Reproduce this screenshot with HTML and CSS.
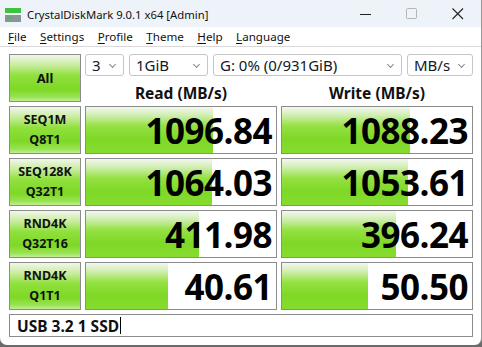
FILE: index.html
```html
<!DOCTYPE html>
<html lang="en">
<head>
    <meta charset="UTF-8">
    <title>CrystalDiskMark 9.0.1 x64 [Admin]</title>
    <link rel="stylesheet" href="styles.css">
</head>
<body>
    <div class="pencere">
        <div class="baslik">
            <svg class="ikon" width="16" height="14" viewBox="0 0 16 14">
                <rect x="0" y="0" width="16" height="5" fill="#3cc43c"/>
                <rect x="0" y="7" width="16" height="7" fill="#8c9499"/>
                <rect x="2" y="9" width="4" height="2" fill="#3cc43c"/>
            </svg>
            <span class="baslikYazi">CrystalDiskMark 9.0.1 x64 [Admin]</span>
            <div class="kontroller">
                <span class="kontrol"><svg width="12" height="12" viewBox="0 0 12 12"><line x1="0" y1="6.5" x2="11" y2="6.5" stroke="#222" stroke-width="1"/></svg></span>
                <span class="kontrol"><svg width="12" height="12" viewBox="0 0 12 12"><rect x="0.5" y="0.5" width="10" height="10" rx="1" fill="none" stroke="#b5b5b5" stroke-width="1"/></svg></span>
                <span class="kontrol"><svg width="12" height="12" viewBox="0 0 12 12"><path d="M0.5 0.5 L11 11 M11 0.5 L0.5 11" stroke="#222" stroke-width="1.1"/></svg></span>
            </div>
        </div>
        <div class="menu">
            <span><u>F</u>ile</span>
            <span><u>S</u>ettings</span>
            <span><u>P</u>rofile</span>
            <span><u>T</u>heme</span>
            <span><u>H</u>elp</span>
            <span><u>L</u>anguage</span>
        </div>
        <div class="icerik">
            <div class="tablo">
                <div class="etiket etiketTek">All</div>
                <div class="ustBolum">
                    <div class="secimler">
                        <div class="secim s1">3<span class="ok"></span></div>
                        <div class="secim s2">1GiB<span class="ok"></span></div>
                        <div class="secim s3">G: 0% (0/931GiB)<span class="ok"></span></div>
                        <div class="secim s4">MB/s<span class="ok"></span></div>
                    </div>
                    <div class="basliklar">
                        <div>Read (MB/s)</div>
                        <div>Write (MB/s)</div>
                    </div>
                </div>

                <div class="etiket">SEQ1M<br>Q8T1</div>
                <div class="deger"><div class="bar" style="width: 67%"></div><span>1096.84</span></div>
                <div class="deger"><div class="bar" style="width: 67.5%"></div><span>1088.23</span></div>

                <div class="etiket">SEQ128K<br>Q32T1</div>
                <div class="deger"><div class="bar" style="width: 66.5%"></div><span>1064.03</span></div>
                <div class="deger"><div class="bar" style="width: 66.5%"></div><span>1053.61</span></div>

                <div class="etiket">RND4K<br>Q32T16</div>
                <div class="deger"><div class="bar" style="width: 59.5%"></div><span>411.98</span></div>
                <div class="deger"><div class="bar" style="width: 60%"></div><span>396.24</span></div>

                <div class="etiket">RND4K<br>Q1T1</div>
                <div class="deger"><div class="bar" style="width: 43%"></div><span>40.61</span></div>
                <div class="deger"><div class="bar" style="width: 45%"></div><span>50.50</span></div>

                <div class="yorum">USB 3.2 1 SSD<span class="imlec"></span></div>
            </div>
        </div>
    </div>
</body>
</html>
```

FILE: styles.css
```css
body {
    margin: 0;
    width: 482px;
    height: 347px;
    background-color: #6b6b6b;
    font-family: "Noto Sans", "Open Sans", sans-serif;
    overflow: hidden;
}
.pencere {
    width: 481px;
    height: 345px;
    background-color: #ffffff;
    border-radius: 0 0 7px 7px;
    border-right: 1px solid #9a9a9a;
    overflow: hidden;
}
.baslik {
    height: 27px;
    background-color: #eef3f9;
    display: flex;
    align-items: center;
    padding-left: 5px;
}
.ikon {
    margin-top: 3px;
}
.baslikYazi {
    margin-left: 6px;
    font-size: 11.3px;
    color: #111;
    margin-top: 2px;
}
.kontroller {
    margin-left: auto;
    display: flex;
    height: 100%;
}
.kontrol {
    width: 46px;
    display: flex;
    align-items: center;
    justify-content: center;
}
.menu {
    height: 19px;
    background-color: #ffffff;
    display: flex;
    align-items: center;
    padding-left: 8px;
    font-size: 11.6px;
    color: #111;
    border-bottom: 1px solid #d9d9d9;
}
.menu span {
    margin-right: 13.5px;
}
.menu u {
    text-underline-offset: 2px;
}
.icerik {
    padding: 7px 0 0 9px;
}
.tablo {
    display: grid;
    grid-template-columns: 72px 192px 192px;
    grid-auto-rows: 48px;
    gap: 4px;
}
.etiket {
    box-sizing: border-box;
    border: 1px solid #8c8c8c;
    background: linear-gradient(to bottom, #f1f7ec 0%, #c9ec9f 22%, #8fe03c 45%, #7ed826 75%, #9ae356 92%, #c2ee94 100%);
    display: flex;
    align-items: center;
    justify-content: center;
    text-align: center;
    font-weight: bold;
    font-size: 12.5px;
    line-height: 20px;
    color: #111;
}
.etiketTek {
    font-size: 13px;
}
.ustBolum {
    grid-column: 2 / 4;
    display: flex;
    flex-direction: column;
}
.secimler {
    display: flex;
    gap: 5px;
    height: 23px;
}
.secim {
    box-sizing: border-box;
    border: 1px solid #c6c6c6;
    border-radius: 3px;
    background-color: #ffffff;
    font-size: 15px;
    color: #101828;
    padding-left: 6px;
    display: flex;
    align-items: center;
    position: relative;
}
.s1 { width: 39px; }
.s2 { width: 79px; }
.s3 { width: 189px; }
.s4 { width: 66px; }
.ok {
    position: absolute;
    right: 8px;
    top: 7px;
    width: 4px;
    height: 4px;
    border-right: 1px solid #888;
    border-bottom: 1px solid #888;
    transform: rotate(45deg);
}
.basliklar {
    display: grid;
    grid-template-columns: 192px 192px;
    gap: 4px;
    flex: 1;
}
.basliklar div {
    text-align: center;
    font-weight: bold;
    font-size: 15.5px;
    color: #111;
    padding-top: 6px;
}
.deger {
    box-sizing: border-box;
    border: 1px solid #8c8c8c;
    background-color: #ffffff;
    position: relative;
    display: flex;
    align-items: center;
    justify-content: flex-end;
    padding-right: 4px;
}
.bar {
    position: absolute;
    left: 0;
    top: 0;
    bottom: 0;
    background: linear-gradient(to bottom, #f4f7f1 0%, #d0eeb1 18%, #94e141 42%, #7fd826 70%, #86dc30 100%);
}
.deger span {
    position: relative;
    font-family: "Open Sans", "Noto Sans", sans-serif;
    font-weight: bold;
    font-size: 35px;
    color: #000;
    letter-spacing: -0.5px;
}
.yorum {
    grid-column: 1 / 4;
    height: 23px;
    box-sizing: border-box;
    border: 1px solid #8c8c8c;
    font-weight: bold;
    font-size: 15.5px;
    color: #111;
    padding-left: 7px;
    display: flex;
    align-items: center;
}
.imlec {
    display: inline-block;
    width: 1px;
    height: 17px;
    background-color: #000;
    margin-left: 1px;
}
```
